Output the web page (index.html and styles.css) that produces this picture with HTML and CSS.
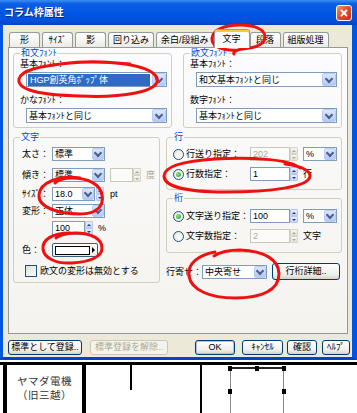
FILE: index.html
```html
<!DOCTYPE html>
<html>
<head>
  <meta charset="utf-8">
  <link rel="stylesheet" href="styles.css">
</head>
<body>
  <div class="window">
    <div class="titlebar">
      <span class="title">コラム枠属性</span>
      <span class="close">
        <svg width="8" height="8" viewBox="0 0 8 8"><path d="M1 1L7 7M7 1L1 7" stroke="#fff" stroke-width="1.8"/></svg>
      </span>
    </div>
    <div class="frame">
      <div class="tabs">
        <span class="tab">形</span>
        <span class="tab">ｻｲｽﾞ</span>
        <span class="tab">影</span>
        <span class="tab">回り込み</span>
        <span class="tab">余白/段組み</span>
        <span class="tab active">文字</span>
        <span class="tab">段落</span>
        <span class="tab">組版処理</span>
      </div>
      <div class="panel">
        <div class="top-row">
          <fieldset class="group font-group">
            <legend>和文ﾌｫﾝﾄ</legend>
            <div class="caption">基本ﾌｫﾝﾄ：</div>
            <div class="select font-select focused"><span class="value">HGP創英角ﾎﾟｯﾌﾟ体</span><span class="drop"></span></div>
            <div class="caption second">かなﾌｫﾝﾄ：</div>
            <div class="select font-select"><span class="value">基本ﾌｫﾝﾄと同じ</span><span class="drop"></span></div>
          </fieldset>
          <fieldset class="group font-group">
            <legend>欧文ﾌｫﾝﾄ</legend>
            <div class="caption">基本ﾌｫﾝﾄ：</div>
            <div class="select font-select"><span class="value">和文基本ﾌｫﾝﾄと同じ</span><span class="drop"></span></div>
            <div class="caption second">数字ﾌｫﾝﾄ：</div>
            <div class="select font-select"><span class="value">基本ﾌｫﾝﾄと同じ</span><span class="drop"></span></div>
          </fieldset>
        </div>

        <div class="mid-row">
          <fieldset class="group char-group">
            <legend>文字</legend>
            <div class="field gap-m">
              <span class="lbl">太さ：</span>
              <div class="select short"><span class="value">標準</span><span class="drop"></span></div>
            </div>
            <div class="field gap-l">
              <span class="lbl">傾き：</span>
              <div class="select short"><span class="value">標準</span><span class="drop"></span></div>
              <span class="edit angle disabled"></span>
              <span class="spin disabled"><span class="up"></span><span class="down"></span></span>
              <span class="unit dim">度</span>
            </div>
            <div class="field gap-m">
              <span class="lbl">ｻｲｽﾞ：</span>
              <div class="select size"><span class="value">18.0</span><span class="drop"></span></div>
              <span class="spin near"><span class="up"></span><span class="down"></span></span>
              <span class="unit wide-gap">pt</span>
            </div>
            <div class="field gap-s">
              <span class="lbl">変形：</span>
              <div class="select short"><span class="value">正体</span><span class="drop"></span></div>
            </div>
            <div class="field gap-s">
              <span class="lbl"></span>
              <span class="edit pct">100</span>
              <span class="spin"><span class="up"></span><span class="down"></span></span>
              <span class="unit">%</span>
            </div>
            <div class="field gap-xl">
              <span class="lbl">色：</span>
              <span class="color-btn"><span class="swatch"></span><span class="tri"></span></span>
            </div>
            <div class="check-row">
              <span class="check"></span>
              <span>欧文の変形は無効とする</span>
            </div>
          </fieldset>

          <div class="right-col">
            <fieldset class="group line-group">
              <legend>行</legend>
              <div class="rfield first">
                <span class="rlbl"><span class="radio"></span>行送り指定：</span>
                <span class="edit num disabled">202</span>
                <span class="spin disabled"><span class="up"></span><span class="down"></span></span>
                <div class="select pct-select"><span class="value">%</span><span class="drop"></span></div>
              </div>
              <div class="rfield">
                <span class="rlbl"><span class="radio on"></span>行数指定：</span>
                <span class="edit num">1</span>
                <span class="spin"><span class="up"></span><span class="down"></span></span>
                <span class="unit">行</span>
              </div>
            </fieldset>
            <fieldset class="group col-group">
              <legend>桁</legend>
              <div class="rfield first">
                <span class="rlbl"><span class="radio on"></span>文字送り指定：</span>
                <span class="edit num">100</span>
                <span class="spin"><span class="up"></span><span class="down"></span></span>
                <div class="select pct-select"><span class="value">%</span><span class="drop"></span></div>
              </div>
              <div class="rfield">
                <span class="rlbl"><span class="radio"></span>文字数指定：</span>
                <span class="edit num disabled">2</span>
                <span class="spin disabled"><span class="up"></span><span class="down"></span></span>
                <span class="unit">文字</span>
              </div>
            </fieldset>
            <div class="align-row">
              <span class="align-lbl">行寄せ：</span>
              <div class="select align-select"><span class="value">中央寄せ</span><span class="drop"></span></div>
              <span class="btn detail">行桁詳細..</span>
            </div>
          </div>
        </div>
      </div>

      <div class="buttons">
        <span class="btn register">標準として登録..</span>
        <span class="btn unregister disabled">標準登録を解除..</span>
        <span class="btn ok">OK</span>
        <span class="btn cancel">ｷｬﾝｾﾙ</span>
        <span class="btn confirm">確認</span>
        <span class="btn help">ﾍﾙﾌﾟ</span>
      </div>
    </div>
  </div>

  <div class="sheet">
    <div class="cell shop">ヤマダ電機<br>（旧三越）</div>
    <div class="cell middle"><div class="stub"></div></div>
    <div class="cell rest">
      <div class="selection">
        <span class="handle h-tl"></span>
        <span class="handle h-tc"></span>
        <span class="handle h-tr"></span>
        <span class="handle h-ml"></span>
        <span class="handle h-mr"></span>
      </div>
    </div>
  </div>

  <svg class="marks" width="357" height="413" viewBox="0 0 357 413">
    <g fill="none" stroke="#ee1111" stroke-width="3" stroke-linecap="round">
      <path d="M238 50 C222 51 211 46 212 38 C213 29 226 25 240 25 C254 25 265 29 265 37 C265 45 254 48 242 49 C236 50 233 52 234 54"/>
      <path d="M60 64 C100 59 150 63 157 78 C162 92 120 98 80 96 C40 95 17 90 19 79 C21 70 40 66 70 63 C90 61 110 62 130 64"/>
      <path d="M80 178 C60 175 40 182 39 195 C38 207 58 214 80 214 C98 214 104 205 102 195 C100 184 88 178 72 178 C64 178 58 180 55 183"/>
      <path d="M300 168 C290 159 250 157 215 159 C185 161 164 166 164 176 C164 186 185 192 225 192 C270 192 310 187 310 176 C310 170 300 166 285 164"/>
      <path d="M70 233 C52 233 42 240 43 249 C44 258 56 264 72 263 C90 262 102 257 102 248 C102 239 92 233 75 233 C65 233 58 236 56 238"/>
      <path d="M215 252 C198 255 187 264 189 276 C191 290 210 298 235 298 C262 298 279 290 279 274 C279 260 265 251 240 250 C228 250 220 252 214 256"/>
    </g>
  </svg>
</body>
</html>
```

FILE: styles.css
```css
* {
  box-sizing: border-box;
}
body {
  margin: 0;
  width: 357px;
  height: 413px;
  overflow: hidden;
  position: relative;
  background: #fff;
  font-family: "Liberation Sans", "Noto Sans CJK JP", sans-serif;
  font-size: 9px;
  line-height: 12px;
  color: #000;
}

/* window chrome */
.titlebar {
  height: 25px;
  display: flex;
  align-items: center;
  justify-content: space-between;
  padding: 0 5px 0 4px;
  background: linear-gradient(#3d8ef5 0, #0a5fe4 15%, #0055e5 55%, #0450dc 85%, #0242c2 100%);
}
.title {
  color: #fff;
  font-weight: bold;
  font-size: 10px;
  text-shadow: 1px 1px #0a2480;
}
.close {
  width: 16px;
  height: 16px;
  border: 1px solid #fff;
  border-radius: 3px;
  background: linear-gradient(135deg, #f3947a, #df5330 45%, #c1320f);
  display: flex;
  align-items: center;
  justify-content: center;
}
.frame {
  height: 335px;
  border-left: 3px solid #0055e5;
  border-right: 5px solid #0055e5;
  border-bottom: 3px solid #0044c8;
  background: #ece9d8;
  padding: 4px 4px 0 5px;
}

/* tabs */
.tabs {
  display: flex;
  align-items: flex-end;
  height: 18px;
  padding-left: 1px;
  gap: 2px;
}
.tab {
  height: 15px;
  min-width: 31px;
  padding: 0 4px;
  border: 1px solid #919b9c;
  border-bottom: none;
  border-radius: 3px 3px 0 0;
  background: linear-gradient(#fff, #ecebe6);
  text-align: center;
  line-height: 14px;
}
.tab.active {
  position: relative;
  z-index: 1;
  height: 19px;
  min-width: 36px;
  margin: 0 -2px -1px;
  border-top-color: #e68b2c;
  box-shadow: inset 0 2px #ffc83c;
  background: #fcfcfe;
  line-height: 18px;
}
.panel {
  height: 287px;
  border: 1px solid #919b9c;
  background: linear-gradient(#fcfcfe, #f4f3ee);
  padding: 0 5px 0 4px;
}

/* group boxes */
.group {
  margin: 0;
  min-width: 0;
  border: 1px solid #d0d0bf;
  border-radius: 3px;
  padding: 0 4px 4px 6px;
}
.group legend {
  padding: 0 1px;
  color: #0046d5;
  line-height: 10px;
}
.top-row {
  display: flex;
  gap: 11px;
}
.font-group {
  width: 159px;
}
.caption {
  line-height: 12px;
}
.caption.second {
  margin-top: 7px;
}
.mid-row {
  display: flex;
  gap: 6px;
  margin-top: 4px;
}
.char-group {
  width: 147px;
  padding-bottom: 5px;
}
.right-col {
  width: 176px;
  display: flex;
  flex-direction: column;
}
.line-group {
  padding-bottom: 8px;
}
.col-group {
  margin-top: 3px;
  padding-bottom: 9px;
}

/* controls */
.select {
  display: flex;
  align-items: center;
  height: 14px;
  border: 1px solid #7f9db9;
  background: #fff;
}
.select .value {
  flex: 1;
  padding-left: 2px;
  line-height: 12px;
  white-space: nowrap;
  overflow: hidden;
}
.select .drop {
  width: 12px;
  height: 12px;
  border: 1px solid #b9ccf7;
  border-radius: 2px;
  background: linear-gradient(#dde7fe, #b3c8f7);
  display: flex;
  align-items: center;
  justify-content: center;
}
.select .drop::after {
  content: "";
  width: 4px;
  height: 4px;
  border-right: 2px solid #4d6185;
  border-bottom: 2px solid #4d6185;
  transform: translateY(-1px) rotate(45deg);
}
.font-select {
  height: 15px;
  margin: 2px 0 0 6px;
}
.font-select .drop {
  height: 13px;
  width: 14px;
}
.focused .value {
  margin: 1px 2px 1px 1px;
  background: #316ac5;
  color: #fff;
}
.short {
  width: 53px;
}
.size {
  width: 43px;
}
.pct-select {
  width: 34px;
  margin-left: 5px;
}
.align-select {
  width: 65px;
}

.edit {
  height: 14px;
  border: 1px solid #7f9db9;
  background: #fff;
  padding-left: 2px;
  line-height: 12px;
}
.edit.disabled {
  border-color: #c9c7ba;
  background: #fbfbf8;
  color: #aca899;
}
.angle {
  width: 23px;
  margin-left: 5px;
}
.pct {
  width: 33px;
}
.num {
  width: 40px;
}

.spin {
  width: 8px;
  height: 14px;
  display: flex;
  flex-direction: column;
}
.spin.near {
  margin-left: 1px;
}
.spin span {
  flex: 1;
  border: 1px solid #b4c6f2;
  border-radius: 1px;
  background: linear-gradient(#e9eefc, #c9d7f9);
  display: flex;
  align-items: center;
  justify-content: center;
}
.spin .up::after {
  content: "";
  border-left: 2px solid transparent;
  border-right: 2px solid transparent;
  border-bottom: 2px solid #2c3e6b;
}
.spin .down::after {
  content: "";
  border-left: 2px solid transparent;
  border-right: 2px solid transparent;
  border-top: 2px solid #2c3e6b;
}
.spin.disabled span {
  border-color: #d6d4c8;
  background: linear-gradient(#f7f6f1, #e6e4da);
}
.spin.disabled .up::after {
  border-bottom-color: #aca899;
}
.spin.disabled .down::after {
  border-top-color: #aca899;
}
.unit {
  margin-left: 5px;
}
.unit.wide-gap {
  margin-left: 6px;
}
.unit.dim {
  color: #aca899;
}

/* 文字 rows */
.field {
  display: flex;
  align-items: center;
  height: 14px;
}
.gap-s {
  margin-top: 3px;
}
.gap-m {
  margin-top: 5px;
}
.gap-l {
  margin-top: 7px;
}
.gap-xl {
  margin-top: 8px;
}
.lbl {
  width: 32px;
  padding-left: 2px;
}
.color-btn {
  width: 46px;
  height: 14px;
  border: 1px solid #3c5a80;
  border-radius: 2px;
  background: linear-gradient(#fff, #ecebe6);
  display: flex;
  align-items: center;
  padding-left: 2px;
  gap: 2px;
}
.swatch {
  width: 35px;
  height: 9px;
  border: 1px solid #000;
  background: #fff;
}
.tri {
  border-top: 3px solid transparent;
  border-bottom: 3px solid transparent;
  border-left: 3px solid #000;
}
.check-row {
  display: flex;
  align-items: center;
  gap: 3px;
  height: 13px;
  margin-top: 7px;
  padding-left: 5px;
}
.check {
  width: 12px;
  height: 12px;
  border: 1px solid #1c5180;
  background: linear-gradient(135deg, #dcdcd7, #fff);
}

/* 行 / 桁 rows */
.rfield {
  display: flex;
  align-items: center;
  height: 14px;
  margin-top: 6px;
}
.line-group .rfield.first {
  margin-top: 5px;
}
.rlbl {
  width: 77px;
  display: flex;
  align-items: center;
  gap: 2px;
  white-space: nowrap;
}
.radio {
  width: 11px;
  height: 11px;
  border-radius: 50%;
  border: 1px solid #1c5180;
  background: radial-gradient(circle at 65% 65%, #fff, #e0e0da);
  display: flex;
  align-items: center;
  justify-content: center;
}
.radio.on::after {
  content: "";
  width: 5px;
  height: 5px;
  border-radius: 50%;
  background: radial-gradient(circle at 35% 35%, #8be38b, #21a121);
}
.align-row {
  display: flex;
  align-items: center;
  height: 17px;
  margin-top: 10px;
}
.align-lbl {
  width: 36px;
}

/* buttons */
.btn {
  height: 15px;
  border: 1px solid #003c74;
  border-radius: 3px;
  background: linear-gradient(#fff, #f0efea 70%, #d8d2c6);
  text-align: center;
  line-height: 13px;
  white-space: nowrap;
}
.btn.disabled {
  border-color: #c9c7ba;
  background: #f5f4ea;
  color: #aca899;
}
.detail {
  width: 68px;
  height: 17px;
  line-height: 15px;
  margin-left: 5px;
}
.buttons {
  display: flex;
  margin-top: 6px;
  margin-right: -2px;
}
.register {
  width: 74px;
}
.unregister {
  width: 78px;
  margin-left: 8px;
}
.ok {
  width: 40px;
  margin-left: auto;
  box-shadow: inset 0 0 0 1px #a8c4f0;
}
.cancel {
  width: 41px;
  margin-left: 7px;
}
.confirm {
  width: 30px;
  margin-left: 4px;
}
.help {
  width: 28px;
  margin-left: 5px;
}

/* drawing below the dialog */
.sheet {
  display: flex;
  height: 53px;
  margin-top: 2px;
  border-top: 3px solid #000;
}
.cell {
  height: 100%;
}
.shop {
  width: 83px;
  margin-left: 3px;
  border-left: 4px solid #000;
  border-right: 4px solid #000;
  padding: 9px 0 0 10px;
  font-size: 10.5px;
  line-height: 14px;
  letter-spacing: 0.5px;
  color: #333;
}
.middle {
  width: 116px;
  border-right: 2px solid #000;
}
.stub {
  width: 46px;
  height: 25px;
  border-right: 2px solid #000;
}
.rest {
  flex: 1;
}
.selection {
  position: relative;
  width: 54px;
  height: 60px;
  margin: 2px 0 0 28px;
  border: 1px solid #888;
  border-top: 2px solid #222;
}
.handle {
  position: absolute;
  width: 4px;
  height: 5px;
  background: #000;
}
.h-tl { left: -3px; top: -3px; }
.h-tc { left: 24px; top: -3px; }
.h-tr { right: -3px; top: -3px; }
.h-ml { left: -3px; top: 20px; }
.h-mr { right: -3px; top: 20px; }

/* red hand-drawn marks over the screenshot */
.marks {
  position: absolute;
  top: 0;
  left: 0;
  pointer-events: none;
}
```
